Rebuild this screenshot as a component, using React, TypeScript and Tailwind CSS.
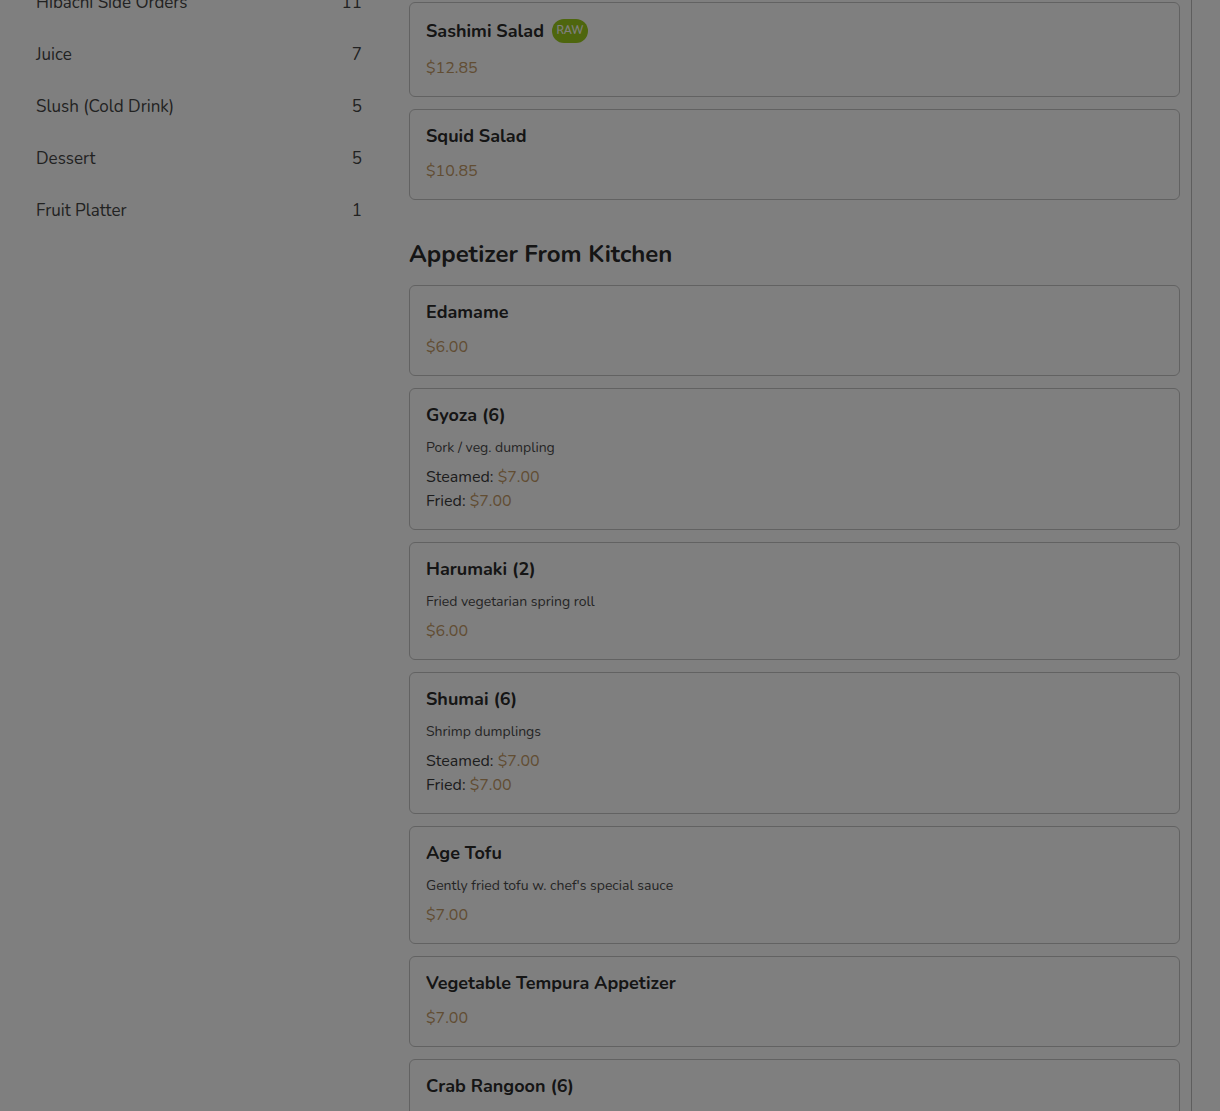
import React from 'react';

type Price = { label?: string; value: string };
type Item = { name: string; desc?: string; prices: Price[]; raw?: boolean };

const categories = [
  { name: 'Hibachi Side Orders', count: 11 },
  { name: 'Juice', count: 7 },
  { name: 'Slush (Cold Drink)', count: 5 },
  { name: 'Dessert', count: 5 },
  { name: 'Fruit Platter', count: 1 },
];

const salads: Item[] = [
  { name: 'Sashimi Salad', raw: true, prices: [{ value: '$12.85' }] },
  { name: 'Squid Salad', prices: [{ value: '$10.85' }] },
];

const appetizers: Item[] = [
  { name: 'Edamame', prices: [{ value: '$6.00' }] },
  {
    name: 'Gyoza (6)',
    desc: 'Pork / veg. dumpling',
    prices: [
      { label: 'Steamed', value: '$7.00' },
      { label: 'Fried', value: '$7.00' },
    ],
  },
  { name: 'Harumaki (2)', desc: 'Fried vegetarian spring roll', prices: [{ value: '$6.00' }] },
  {
    name: 'Shumai (6)',
    desc: 'Shrimp dumplings',
    prices: [
      { label: 'Steamed', value: '$7.00' },
      { label: 'Fried', value: '$7.00' },
    ],
  },
  { name: 'Age Tofu', desc: "Gently fried tofu w. chef's special sauce", prices: [{ value: '$7.00' }] },
  { name: 'Vegetable Tempura Appetizer', prices: [{ value: '$7.00' }] },
  { name: 'Crab Rangoon (6)', desc: 'Cream cheese & crab meat wonton', prices: [{ value: '$7.00' }] },
];

function MenuCard({ item }: { item: Item }) {
  return (
    <div className="rounded-md border border-[#c4c4c4] bg-white p-4">
      <div className="flex items-center gap-2">
        <h3 className="text-[18px] font-bold leading-5 text-[#2a2a2a]">{item.name}</h3>
        {item.raw && (
          <span className="flex h-6 w-9 items-center justify-center rounded-full bg-[#9ccc1c] text-[11px] font-semibold text-white">
            RAW
          </span>
        )}
      </div>
      {item.desc && <p className="mt-[13px] text-[14px] leading-5 text-[#4a4a4a]">{item.desc}</p>}
      <div className={item.desc ? 'mt-[7px]' : 'mt-[13px]'}>
        {item.prices.map((p, i) => (
          <div key={i} className="text-[16px] leading-6 text-[#3a3a3a]">
            {p.label && <span>{p.label}: </span>}
            <span className="text-[#c39a66]">{p.value}</span>
          </div>
        ))}
      </div>
    </div>
  );
}

export default function App() {
  return (
    <div className="relative min-h-[1300px] bg-white" style={{ fontFamily: 'Nunito, Lato, "Noto Sans", sans-serif' }}>
      <div className="flex">
        <aside className="w-[386px] shrink-0 pl-9 pr-6">
          <ul className="-mt-[23px]">
            {categories.map(c => (
              <li key={c.name} className="flex items-center justify-between py-3.5 text-[17px] leading-6 text-[#444444]">
                <span>{c.name}</span>
                <span>{c.count}</span>
              </li>
            ))}
          </ul>
        </aside>

        <main className="flex-1 border-r border-[#bdbdbd] pl-[23px] pr-[11px] pt-[2px]">
          <div className="space-y-3">
            {salads.map(item => (
              <MenuCard key={item.name} item={item} />
            ))}
          </div>

          <section className="mt-[38px]">
            <h2 className="mb-[15px] text-[24px] font-bold leading-8 text-[#2a2a2a]">Appetizer From Kitchen</h2>
            <div className="space-y-3">
              {appetizers.map(item => (
                <MenuCard key={item.name} item={item} />
              ))}
            </div>
          </section>
        </main>
        <div className="w-7 shrink-0" />
      </div>

      <div className="fixed inset-0 bg-black/50" />
    </div>
  );
}
